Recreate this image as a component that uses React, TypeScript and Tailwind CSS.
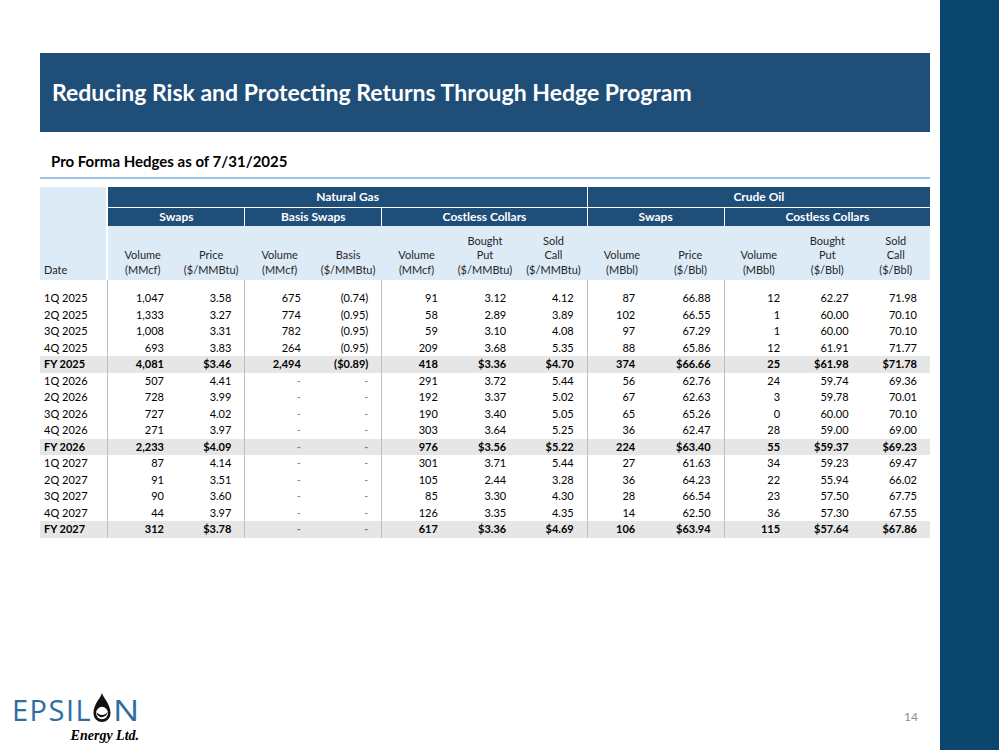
const rows: { cells: string[]; total?: boolean }[] = [
  { cells: ["1Q 2025", "1,047", "3.58", "675", "(0.74)", "91", "3.12", "4.12", "87", "66.88", "12", "62.27", "71.98"] },
  { cells: ["2Q 2025", "1,333", "3.27", "774", "(0.95)", "58", "2.89", "3.89", "102", "66.55", "1", "60.00", "70.10"] },
  { cells: ["3Q 2025", "1,008", "3.31", "782", "(0.95)", "59", "3.10", "4.08", "97", "67.29", "1", "60.00", "70.10"] },
  { cells: ["4Q 2025", "693", "3.83", "264", "(0.95)", "209", "3.68", "5.35", "88", "65.86", "12", "61.91", "71.77"] },
  { cells: ["FY 2025", "4,081", "$3.46", "2,494", "($0.89)", "418", "$3.36", "$4.70", "374", "$66.66", "25", "$61.98", "$71.78"], total: true },
  { cells: ["1Q 2026", "507", "4.41", "-", "-", "291", "3.72", "5.44", "56", "62.76", "24", "59.74", "69.36"] },
  { cells: ["2Q 2026", "728", "3.99", "-", "-", "192", "3.37", "5.02", "67", "62.63", "3", "59.78", "70.01"] },
  { cells: ["3Q 2026", "727", "4.02", "-", "-", "190", "3.40", "5.05", "65", "65.26", "0", "60.00", "70.10"] },
  { cells: ["4Q 2026", "271", "3.97", "-", "-", "303", "3.64", "5.25", "36", "62.47", "28", "59.00", "69.00"] },
  { cells: ["FY 2026", "2,233", "$4.09", "-", "-", "976", "$3.56", "$5.22", "224", "$63.40", "55", "$59.37", "$69.23"], total: true },
  { cells: ["1Q 2027", "87", "4.14", "-", "-", "301", "3.71", "5.44", "27", "61.63", "34", "59.23", "69.47"] },
  { cells: ["2Q 2027", "91", "3.51", "-", "-", "105", "2.44", "3.28", "36", "64.23", "22", "55.94", "66.02"] },
  { cells: ["3Q 2027", "90", "3.60", "-", "-", "85", "3.30", "4.30", "28", "66.54", "23", "57.50", "67.75"] },
  { cells: ["4Q 2027", "44", "3.97", "-", "-", "126", "3.35", "4.35", "14", "62.50", "36", "57.30", "67.55"] },
  { cells: ["FY 2027", "312", "$3.78", "-", "-", "617", "$3.36", "$4.69", "106", "$63.94", "115", "$57.64", "$67.86"], total: true },
];

const labels: string[][] = [
  ["Volume", "(MMcf)"],
  ["Price", "($/MMBtu)"],
  ["Volume", "(MMcf)"],
  ["Basis", "($/MMBtu)"],
  ["Volume", "(MMcf)"],
  ["Bought", "Put", "($/MMBtu)"],
  ["Sold", "Call", "($/MMBtu)"],
  ["Volume", "(MBbl)"],
  ["Price", "($/Bbl)"],
  ["Volume", "(MBbl)"],
  ["Bought", "Put", "($/Bbl)"],
  ["Sold", "Call", "($/Bbl)"],
];

// columns that close a group get a grey rule on their right
const groupEnd = [0, 2, 4, 7, 9];

function cellClass(i: number) {
  let c = "flex items-center ";
  if (i === 0) c += "justify-start pl-[4px] ";
  else if (i === 8) c += "justify-end pr-[21px] ";
  else c += "justify-end pr-[13px] ";
  if (groupEnd.includes(i)) c += "border-r border-[#bfbfbf] ";
  return c;
}

function DropO() {
  return (
    <svg width="18" height="35" viewBox="0 0 20 34" className="mx-[1px] mb-[-1px]">
      <path d="M10 0.5 C10.6 5.5 19.5 12.5 19.5 23.5 A9.5 9.5 0 0 1 0.5 23.5 C0.5 12.5 9.4 5.5 10 0.5 Z" fill="#111" />
      <ellipse cx="10" cy="23.2" rx="6.6" ry="6.9" fill="#fff" />
      <path d="M3.8 22.5 C5 29.5 15 29.8 16.4 21.5 C14.2 26 8 26.6 3.8 22.5 Z" fill="#111" />
    </svg>
  );
}

export default function App() {
  return (
    <div className="flex h-[750px] w-[999px] bg-white font-['Lato',sans-serif] text-black">
      <div className="flex w-[940px] flex-col">
        {/* Title band */}
        <div className="mt-[53px] ml-[40px] mr-[10px] flex h-[79px] items-center bg-[#1f4e79] pl-[12px]">
          <h1 className="text-[23px] font-bold text-white">
            Reducing Risk and Protecting Returns Through Hedge Program
          </h1>
        </div>

        <div className="ml-[40px] mr-[10px]">
          <div className="mt-[20px] h-[18px] pl-[11px] text-[15px] leading-[18px] font-bold">
            Pro Forma Hedges as of 7/31/2025
          </div>
          <div className="mt-[7px] h-[2px] bg-[#9dc3e6]" />

          {/* Table header */}
          <div className="mt-[8px] grid grid-cols-[repeat(13,minmax(0,1fr))] grid-rows-[21px_18px_54px] text-[11px]">
            <div className="row-span-3 flex items-end border-r-2 border-white bg-[#ddebf7] pb-[3px] pl-[4px] leading-[14.5px] text-[#262626]">
              Date
            </div>
            <div className="col-span-7 flex items-center justify-center border-r border-b border-white bg-[#1f4e79] text-[12px] font-bold text-white">
              Natural Gas
            </div>
            <div className="col-span-5 flex items-center justify-center border-b border-white bg-[#1f4e79] text-[12px] font-bold text-white">
              Crude Oil
            </div>
            <div className="col-span-2 flex items-center justify-center border-r border-white bg-[#1f4e79] text-[12px] font-bold text-white">
              Swaps
            </div>
            <div className="col-span-2 flex items-center justify-center border-r border-white bg-[#1f4e79] text-[12px] font-bold text-white">
              Basis Swaps
            </div>
            <div className="col-span-3 flex items-center justify-center border-r border-white bg-[#1f4e79] text-[12px] font-bold text-white">
              Costless Collars
            </div>
            <div className="col-span-2 flex items-center justify-center border-r border-white bg-[#1f4e79] text-[12px] font-bold text-white">
              Swaps
            </div>
            <div className="col-span-3 flex items-center justify-center bg-[#1f4e79] text-[12px] font-bold text-white">
              Costless Collars
            </div>
            {labels.map((l, i) => (
              <div
                key={i}
                className="flex flex-col items-center justify-end bg-[#ddebf7] pb-[3px] text-center leading-[14.5px] text-[#262626]"
              >
                {l.map((t, j) => (
                  <span key={j}>{t}</span>
                ))}
              </div>
            ))}
          </div>

          {/* Table body */}
          <div className="text-[11px]">
            <div className="grid h-[10px] grid-cols-[repeat(13,minmax(0,1fr))]">
              {Array.from({ length: 13 }).map((_, i) => (
                <div key={i} className={cellClass(i)} />
              ))}
            </div>
            {rows.map((r, ri) => (
              <div
                key={ri}
                className={
                  "grid h-[16.5px] grid-cols-[repeat(13,minmax(0,1fr))] " +
                  (r.total ? "bg-[#e7e6e6] font-bold" : "")
                }
              >
                {r.cells.map((c, i) => (
                  <div key={i} className={cellClass(i) + (c === "-" ? "text-[#7f7f7f]" : "")}>
                    {c}
                  </div>
                ))}
              </div>
            ))}
          </div>
        </div>

        {/* Footer */}
        <div className="mt-auto flex items-end justify-between pb-[6px] pl-[12px] pr-[22px]">
          <div className="flex flex-col items-end">
            <div className="flex items-end font-['Open_Sans',sans-serif] text-[29px] leading-[29px] text-[#2e6da4]">
              <span className="tracking-[1.5px]">EPSIL</span>
              <DropO />
              <span className="ml-[1px] inline-block origin-left scale-x-[1.2] pr-[4px]">N</span>
            </div>
            <div className="mt-[4px] font-['Liberation_Serif',serif] text-[14px] leading-[16px] font-bold italic">
              Energy Ltd.
            </div>
          </div>
          <div className="mb-[18px] text-[12px] text-[#8c8c8c]">14</div>
        </div>
      </div>
      <div className="flex-1 bg-[#0b466e]" />
    </div>
  );
}
